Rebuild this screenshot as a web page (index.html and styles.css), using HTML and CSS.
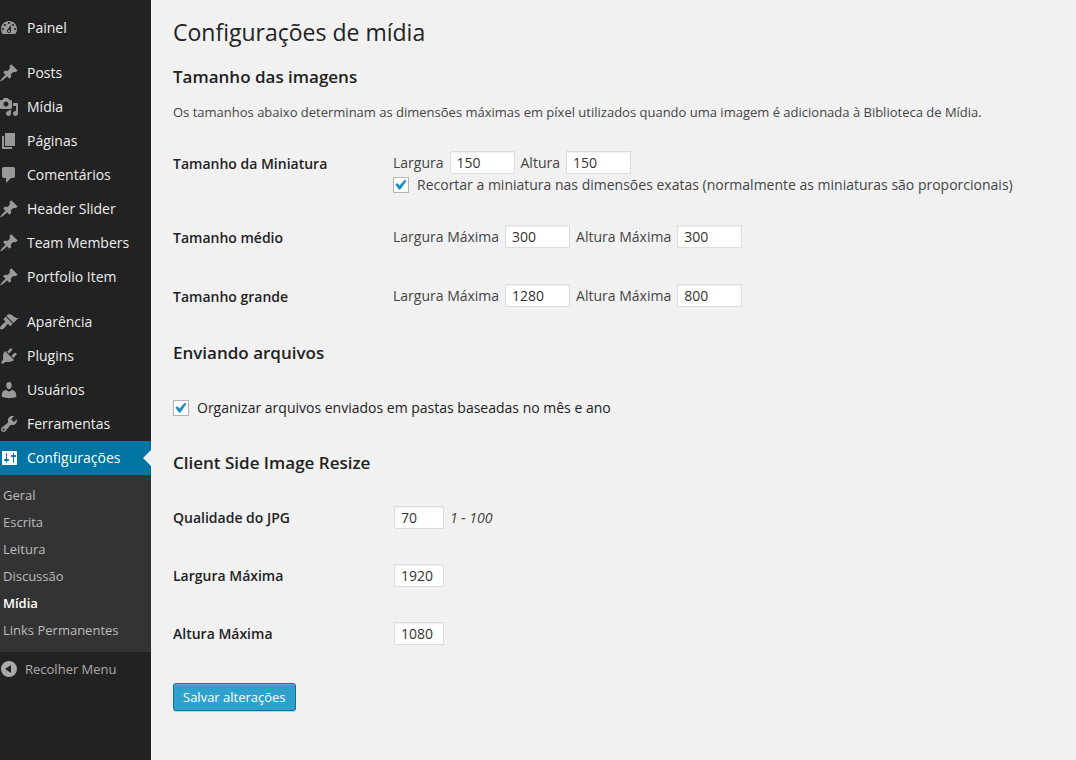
FILE: index.html
```html
<!DOCTYPE html>
<html lang="pt-BR">
<head>
<meta charset="utf-8">
<title>Configurações de mídia</title>
<link rel="stylesheet" href="styles.css">
</head>
<body>
<svg class="sprite" aria-hidden="true">
  <symbol id="i-dashboard" viewBox="0 0 20 20"><path d="M3.76 16h12.48c1.1-1.37 1.76-3.11 1.76-5 0-4.42-3.58-8-8-8s-8 3.58-8 8c0 1.89.66 3.63 1.76 5zM10 4c.55 0 1 .45 1 1s-.45 1-1 1-1-.45-1-1 .45-1 1-1zM6 6c.55 0 1 .45 1 1s-.45 1-1 1-1-.45-1-1 .45-1 1-1zm8 0c.55 0 1 .45 1 1s-.45 1-1 1-1-.45-1-1 .45-1 1-1zm-5.37 5.55L12 7v6c0 1.1-.9 2-2 2s-2-.9-2-2c0-.57.24-1.08.63-1.45zM4 10c.55 0 1 .45 1 1s-.45 1-1 1-1-.45-1-1 .45-1 1-1zm12 0c.55 0 1 .45 1 1s-.45 1-1 1-1-.45-1-1 .45-1 1-1zm-5 3c0-.55-.45-1-1-1s-1 .45-1 1 .45 1 1 1 1-.45 1-1z"/></symbol>
  <symbol id="i-pin" viewBox="0 0 20 20"><path d="M10.44 3.02l1.82-1.82 6.36 6.35-1.83 1.82c-1.05-.68-2.48-.57-3.41.36l-.75.75c-.92.93-1.04 2.35-.35 3.41l-1.83 1.82-2.41-2.41-2.8 2.79c-.42.42-3.38 2.71-3.8 2.29s1.86-3.39 2.28-3.81l2.79-2.79L4.1 9.36l1.83-1.82c1.05.69 2.48.57 3.4-.36l.75-.75c.93-.92 1.05-2.35.36-3.41z"/></symbol>
  <symbol id="i-media" viewBox="0 0 20 20"><path d="M13 11V4c0-.55-.45-1-1-1h-1.67L9 1H5L3.67 3H2c-.55 0-1 .45-1 1v7c0 .55.45 1 1 1h10c.55 0 1-.45 1-1zM7 4.5c1.38 0 2.5 1.12 2.5 2.5S8.38 9.5 7 9.5 4.5 8.38 4.5 7 5.62 4.5 7 4.5zM14 6h5v10.5c0 1.38-1.12 2.5-2.5 2.5S14 17.88 14 16.5s1.12-2.5 2.5-2.5c.17 0 .34.02.5.05V9h-3V6zm-4 8.05V13h2v3.5c0 1.38-1.12 2.5-2.5 2.5S7 17.88 7 16.5 8.12 14 9.5 14c.17 0 .34.02.5.05z"/></symbol>
  <symbol id="i-page" viewBox="0 0 20 20"><path d="M6 15V2h10v13H6zm-1 1h8v2H3V5h2v11z"/></symbol>
  <symbol id="i-comment" viewBox="0 0 20 20"><path d="M5 2h9c1.1 0 2 .9 2 2v7c0 1.1-.9 2-2 2h-2l-5 5v-5H5c-1.1 0-2-.9-2-2V4c0-1.1.9-2 2-2z"/></symbol>
  <symbol id="i-brush" viewBox="0 0 20 20"><path d="M14.48 11.06L7.41 3.99l1.5-1.5c.5-.56 2.3-.47 3.51.32 1.21.8 1.43 1.28 2.91 2.1 1.18.64 2.45 1.26 4.45.85zm-.71.71L6.7 4.7 4.93 6.47c-.39.39-.39 1.02 0 1.41l1.06 1.06c.39.39.39 1.03 0 1.42-.6.6-1.43 1.11-2.21 1.69-.35.26-.7.53-1.01.84C1.43 14.23.4 16.08 1.4 17.07c.99 1 2.84-.03 4.18-1.36.31-.31.58-.66.85-1.02.57-.78 1.08-1.61 1.69-2.21.39-.39 1.02-.39 1.41 0l1.06 1.06c.39.39 1.02.39 1.41 0z"/></symbol>
  <symbol id="i-plug" viewBox="0 0 20 20"><path d="M13.11 4.36L9.87 7.6 8 5.73l3.24-3.24c.35-.34 1.05-.2 1.56.32.52.51.66 1.21.31 1.55zm-8 1.77l.91-1.12 9.01 9.01-1.19.84c-.71.71-2.63 1.16-3.82 1.16H6.14L4.9 17.26c-.59.59-1.54.59-2.12 0-.59-.58-.59-1.53 0-2.12l1.24-1.24v-3.88c0-1.13.4-3.19 1.09-3.89zm7.26 3.97l3.24-3.24c.34-.35 1.04-.21 1.55.31.52.51.66 1.21.31 1.55l-3.24 3.25z"/></symbol>
  <symbol id="i-user" viewBox="0 0 20 20"><path d="M10 9.25c-2.27 0-2.73-3.44-2.73-3.44C7 4.02 7.82 2 9.97 2c2.16 0 2.98 2.02 2.71 3.81 0 0-.41 3.44-2.68 3.44zm0 2.57L12.72 10c2.39 0 4.52 2.33 4.52 4.53v2.49s-3.65 1.13-7.24 1.13c-3.65 0-7.24-1.13-7.24-1.13v-2.49c0-2.25 1.94-4.48 4.47-4.48z"/></symbol>
  <symbol id="i-wrench" viewBox="0 0 20 20"><path d="M16.68 9.77c-1.34 1.34-3.3 1.67-4.95.99l-5.41 6.52c-.99.99-2.59.99-3.58 0s-.99-2.59 0-3.57l6.52-5.42c-.68-1.65-.35-3.61.99-4.95 1.28-1.28 3.12-1.62 4.72-1.06l-2.89 2.89 2.82 2.82 2.86-2.87c.53 1.58.18 3.39-1.08 4.65zM3.81 16.21c.4.39 1.04.39 1.43 0 .4-.4.4-1.04 0-1.43-.39-.4-1.03-.4-1.43 0-.39.39-.39 1.03 0 1.43z"/></symbol>
  <symbol id="i-settings" viewBox="0 0 20 20"><path d="M18 16V4c0-.55-.45-1-1-1H4c-.55 0-1 .45-1 1v12c0 .55.45 1 1 1h13c.55 0 1-.45 1-1zM8 11h1c.55 0 1 .45 1 1s-.45 1-1 1H8v1.5c0 .28-.22.5-.5.5s-.5-.22-.5-.5V13H6c-.55 0-1-.45-1-1s.45-1 1-1h1V5.5c0-.28.22-.5.5-.5s.5.22.5.5V11zm6-2h-1c-.55 0-1-.45-1-1s.45-1 1-1h1V5.5c0-.28.22-.5.5-.5s.5.22.5.5V7h1c.55 0 1 .45 1 1s-.45 1-1 1h-1v5.5c0 .28-.22.5-.5.5s-.5-.22-.5-.5V9z"/></symbol>
  <symbol id="i-collapse" viewBox="0 0 20 20"><path fill-rule="evenodd" d="M10 2a8 8 0 1 1 0 16a8 8 0 1 1 0-16zM12 6L6 10l6 4z"/></symbol>
</svg>
<div class="layout">
  <nav class="sidebar" aria-label="Menu principal">
    <ul class="menu">
      <li class="menu-end"><a class="menu-link" href="#painel"><svg class="icon"><use href="#i-dashboard"/></svg>Painel</a></li>
      <li><a class="menu-link" href="#posts"><svg class="icon"><use href="#i-pin"/></svg>Posts</a></li>
      <li><a class="menu-link" href="#midia"><svg class="icon"><use href="#i-media"/></svg>Mídia</a></li>
      <li><a class="menu-link" href="#paginas"><svg class="icon"><use href="#i-page"/></svg>Páginas</a></li>
      <li><a class="menu-link" href="#comentarios"><svg class="icon"><use href="#i-comment"/></svg>Comentários</a></li>
      <li><a class="menu-link" href="#header-slider"><svg class="icon"><use href="#i-pin"/></svg>Header Slider</a></li>
      <li><a class="menu-link" href="#team-members"><svg class="icon"><use href="#i-pin"/></svg>Team Members</a></li>
      <li class="menu-end"><a class="menu-link" href="#portfolio"><svg class="icon"><use href="#i-pin"/></svg>Portfolio Item</a></li>
      <li><a class="menu-link" href="#aparencia"><svg class="icon"><use href="#i-brush"/></svg>Aparência</a></li>
      <li><a class="menu-link" href="#plugins"><svg class="icon"><use href="#i-plug"/></svg>Plugins</a></li>
      <li><a class="menu-link" href="#usuarios"><svg class="icon"><use href="#i-user"/></svg>Usuários</a></li>
      <li><a class="menu-link" href="#ferramentas"><svg class="icon"><use href="#i-wrench"/></svg>Ferramentas</a></li>
      <li>
        <a class="menu-link menu-link-open" href="#configuracoes"><svg class="icon"><use href="#i-settings"/></svg>Configurações</a>
        <ul class="submenu">
          <li><a class="submenu-link" href="#geral">Geral</a></li>
          <li><a class="submenu-link" href="#escrita">Escrita</a></li>
          <li><a class="submenu-link" href="#leitura">Leitura</a></li>
          <li><a class="submenu-link" href="#discussao">Discussão</a></li>
          <li><a class="submenu-link submenu-current" href="#opcoes-midia" aria-current="page">Mídia</a></li>
          <li><a class="submenu-link" href="#links">Links Permanentes</a></li>
        </ul>
      </li>
    </ul>
    <button class="collapse" type="button"><svg class="icon"><use href="#i-collapse"/></svg>Recolher Menu</button>
  </nav>

  <main class="content">
    <h1 class="title">Configurações de mídia</h1>
    <form>
      <h2 class="section-title">Tamanho das imagens</h2>
      <p class="intro">Os tamanhos abaixo determinam as dimensões máximas em píxel utilizados quando uma imagem é adicionada à Biblioteca de Mídia.</p>
      <table class="form-table">
        <tr>
          <th scope="row">Tamanho da Miniatura</th>
          <td>
            <div class="line">
              <label for="thumb-w">Largura</label>
              <input class="field" id="thumb-w" type="text" value="150">
              <label for="thumb-h">Altura</label>
              <input class="field" id="thumb-h" type="text" value="150">
            </div>
            <label class="check-line"><input class="check" type="checkbox" checked>Recortar a miniatura nas dimensões exatas (normalmente as miniaturas são proporcionais)</label>
          </td>
        </tr>
        <tr>
          <th scope="row">Tamanho médio</th>
          <td>
            <div class="line">
              <label for="medium-w">Largura Máxima</label>
              <input class="field" id="medium-w" type="text" value="300">
              <label for="medium-h">Altura Máxima</label>
              <input class="field" id="medium-h" type="text" value="300">
            </div>
          </td>
        </tr>
        <tr>
          <th scope="row">Tamanho grande</th>
          <td>
            <div class="line">
              <label for="large-w">Largura Máxima</label>
              <input class="field" id="large-w" type="text" value="1280">
              <label for="large-h">Altura Máxima</label>
              <input class="field" id="large-h" type="text" value="800">
            </div>
          </td>
        </tr>
      </table>

      <h2 class="section-title">Enviando arquivos</h2>
      <label class="check-line check-alone"><input class="check" type="checkbox" checked>Organizar arquivos enviados em pastas baseadas no mês e ano</label>

      <h2 class="section-title">Client Side Image Resize</h2>
      <table class="form-table form-table-tight">
        <tr>
          <th scope="row"><label for="quality">Qualidade do JPG</label></th>
          <td>
            <div class="line">
              <input class="field field-small" id="quality" type="text" value="70">
              <em>1 - 100</em>
            </div>
          </td>
        </tr>
        <tr>
          <th scope="row"><label for="max-w">Largura Máxima</label></th>
          <td><div class="line"><input class="field field-small" id="max-w" type="text" value="1920"></div></td>
        </tr>
        <tr>
          <th scope="row"><label for="max-h">Altura Máxima</label></th>
          <td><div class="line"><input class="field field-small" id="max-h" type="text" value="1080"></div></td>
        </tr>
      </table>
      <button class="save" type="submit">Salvar alterações</button>
    </form>
  </main>
</div>
</body>
</html>
```
FILE: styles.css
```css
* { box-sizing: border-box; }

body {
  margin: 0;
  background: #f1f1f1;
  color: #444;
  font: 14px/22px "Open Sans", sans-serif;
}

ul { list-style: none; margin: 0; padding: 0; }
a { text-decoration: none; }
.sprite { display: none; }

.layout { display: flex; min-height: 100vh; }

/* Sidebar */
.sidebar {
  flex: none;
  width: 151px;
  padding-top: 11px;
  background: #222;
}

.menu-end { margin-bottom: 11px; }

.menu-link {
  display: flex;
  align-items: center;
  gap: 8px;
  height: 34px;
  color: #eee;
  line-height: 20px;
}

.icon {
  flex: none;
  width: 20px;
  height: 20px;
  margin-left: -1px;
  fill: #999;
}

.menu-link-open {
  position: relative;
  background: #0074a2;
  color: #fff;
}
.menu-link-open .icon { fill: #fff; }
.menu-link-open::after {
  content: "";
  position: absolute;
  right: 0;
  top: 9px;
  border: 8px solid transparent;
  border-left: 0;
  border-right-color: #f1f1f1;
}

.submenu { padding: 7px 0 8px; background: #333; }
.submenu-link {
  display: block;
  padding-left: 3px;
  color: #bbb;
  font-size: 13px;
  line-height: 27px;
}
.submenu-current { color: #fff; font-weight: 600; }

.collapse {
  display: flex;
  align-items: center;
  gap: 6px;
  width: 100%;
  height: 34px;
  padding: 0;
  border: 0;
  background: none;
  color: #aaa;
  font: 13px/20px "Open Sans", sans-serif;
}
.collapse .icon { fill: #aaa; }

/* Content */
.content { flex: 1; min-width: 0; padding: 15px 22px 40px; }

.title {
  margin: 0;
  color: #222;
  font-size: 23px;
  font-weight: 400;
  line-height: 34px;
}

.section-title {
  margin: 16px 0 13px;
  color: #222;
  font-size: 17px;
  font-weight: 600;
  line-height: 24px;
}

.intro { margin: 0 0 11px; font-size: 13px; line-height: 20px; }

.form-table { width: 100%; border-collapse: collapse; }
.form-table th {
  width: 210px;
  padding: 21px 10px 10px 0;
  color: #222;
  font-weight: 600;
  line-height: 20px;
  text-align: left;
  vertical-align: top;
}
.form-table td {
  height: 59px;
  padding: 18px 10px 11px;
  vertical-align: top;
}
.form-table-tight th { padding-top: 20px; }
.form-table-tight td { height: 58px; }

.line { display: flex; flex-wrap: wrap; align-items: center; gap: 6px; }

.field {
  width: 65px;
  height: 23px;
  margin: 0;
  padding: 3px 6px;
  border: 1px solid #ddd;
  background: #fff;
  box-shadow: inset 0 1px 2px rgba(0, 0, 0, 0.07);
  color: #333;
  font: 14px/17px "Open Sans", sans-serif;
}
.field-small { width: 50px; margin-left: 1px; }

.check-line { display: flex; align-items: center; gap: 8px; }
.check-alone { margin: 32px 0; color: #222; }

.check {
  appearance: none;
  flex: none;
  width: 16px;
  height: 16px;
  margin: 0;
  border: 1px solid #b4b4b4;
  background: #fff;
}
.check:checked {
  background: #fff url("data:image/svg+xml,%3Csvg xmlns='http://www.w3.org/2000/svg' viewBox='4 3 14 14'%3E%3Cpath fill='%231e8cbe' stroke='%231e8cbe' stroke-width='.6' d='M14.83 4.89l1.34.94-5.81 8.38H9.02L5.78 9.67l1.34-1.25 2.57 2.4z'/%3E%3C/svg%3E") center / 14px 14px no-repeat;
}

.save {
  display: block;
  height: 28px;
  margin-top: 21px;
  padding: 0 9px;
  border: 1px solid #0074a2;
  border-radius: 3px;
  background: #2ea2cc;
  box-shadow: inset 0 1px 0 rgba(120, 200, 230, 0.5), 0 1px 0 rgba(0, 0, 0, 0.15);
  color: #fff;
  font: 13px/26px "Open Sans", sans-serif;
}
```
